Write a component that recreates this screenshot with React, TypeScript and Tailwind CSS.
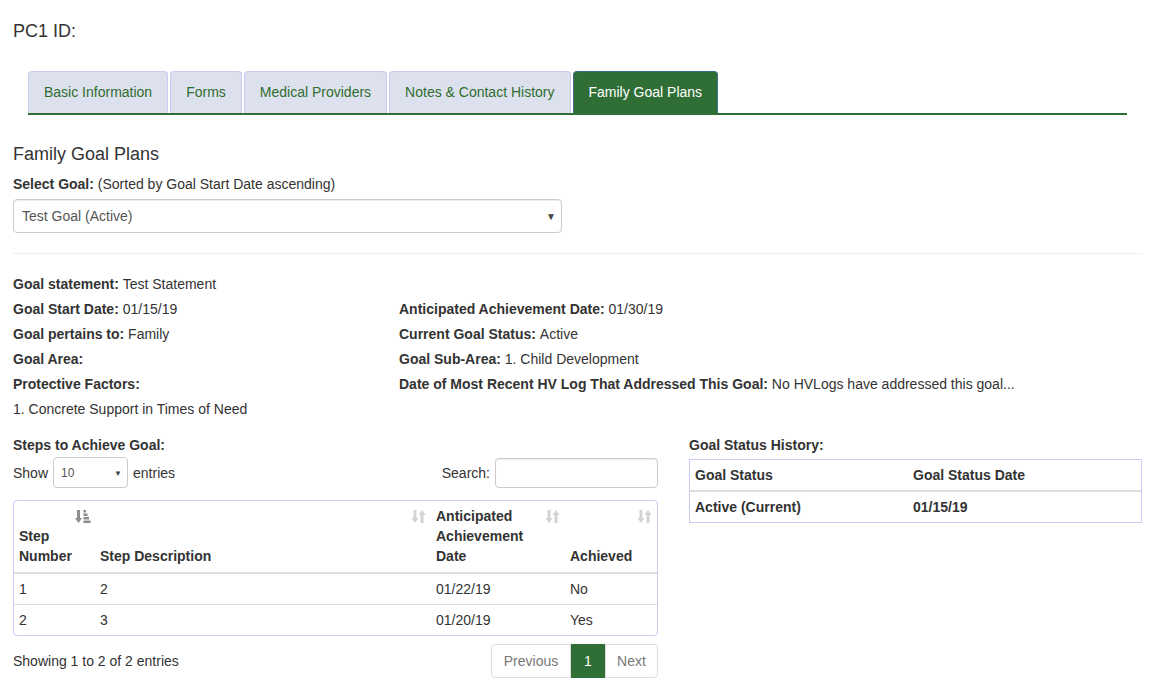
import React from "react";

function SortBoth() {
  return (
    <svg width="15" height="15" viewBox="0 0 15 15" className="block">
      <g fill="#d3d3d3">
        <rect x="2.5" y="1" width="3" height="9" />
        <polygon points="0.5,9 7.5,9 4,14" />
        <rect x="9.5" y="5" width="3" height="9" />
        <polygon points="7.5,6 14.5,6 11,1" />
      </g>
    </svg>
  );
}

function SortAsc() {
  return (
    <svg width="16" height="15" viewBox="0 0 16 15" className="block">
      <g fill="#8c8c8c">
        <rect x="2" y="1" width="3" height="9" />
        <polygon points="0,9 7,9 3.5,14" />
        <rect x="8.5" y="1" width="2.5" height="2.5" />
        <rect x="8.5" y="4.5" width="4" height="2.5" />
        <rect x="8.5" y="8" width="5.5" height="2.5" />
        <rect x="8.5" y="11.5" width="7" height="2.5" />
      </g>
    </svg>
  );
}

const tabs = [
  "Basic Information",
  "Forms",
  "Medical Providers",
  "Notes & Contact History",
];

function Tab({ label }: { label: string }) {
  return (
    <div className="h-[42px] px-[15px] pb-[2px] flex items-center border border-b-0 border-[#c9cbf3] rounded-t-[4px] bg-[#dde1ee] text-[#2f6d2f] text-[14px] mr-[2px]">
      {label}
    </div>
  );
}

function InfoRow({ children }: { children: React.ReactNode }) {
  return <div className="h-[25px] flex items-center">{children}</div>;
}

export default function App() {
  return (
    <div className="font-['Liberation_Sans',Arial,sans-serif] text-[#333] text-[14px] leading-[20px] bg-white min-h-[700px] px-[13px]">
      <div className="pt-[21px] text-[18px] leading-[20px]">PC1 ID:</div>

      <div className="mx-[15px] mt-[30px] border-b-2 border-[#2f6f36] flex items-end">
        {tabs.map((t) => (
          <Tab key={t} label={t} />
        ))}
        <div className="h-[42px] px-[15px] pb-[2px] flex items-center border border-b-0 border-[#3b6f8a] rounded-t-[4px] bg-[#2f6f36] text-white text-[14px]">
          Family Goal Plans
        </div>
      </div>

      <div className="mt-[29px] text-[18px] leading-[20px]">Family Goal Plans</div>
      <div className="mt-[10px]">
        <span className="font-bold">Select Goal:</span> (Sorted by Goal Start Date ascending)
      </div>
      <div className="mt-[5px] relative w-[549px] h-[34px] border border-[#ccc] rounded-[4px] flex items-center pl-[8px] text-[#555] shadow-[inset_0_1px_1px_rgba(0,0,0,0.075)]">
        Test Goal (Active)
        <span className="absolute right-[5px] top-[7px] text-[10px] text-[#444]">▼</span>
      </div>

      <div className="mt-[20px] border-t border-[#eee]" />

      <div className="mt-[17px]">
        <InfoRow>
          <span className="font-bold">Goal statement:</span>&nbsp;Test Statement
        </InfoRow>
        <div className="grid grid-cols-[386px_1fr]">
          <InfoRow>
            <span className="font-bold">Goal Start Date:</span>&nbsp;01/15/19
          </InfoRow>
          <InfoRow>
            <span className="font-bold">Anticipated Achievement Date:</span>&nbsp;01/30/19
          </InfoRow>
          <InfoRow>
            <span className="font-bold">Goal pertains to:</span>&nbsp;Family
          </InfoRow>
          <InfoRow>
            <span className="font-bold">Current Goal Status:</span>&nbsp;Active
          </InfoRow>
          <InfoRow>
            <span className="font-bold">Goal Area:</span>
          </InfoRow>
          <InfoRow>
            <span className="font-bold">Goal Sub-Area:</span>&nbsp;1. Child Development
          </InfoRow>
          <InfoRow>
            <span className="font-bold">Protective Factors:</span>
          </InfoRow>
          <InfoRow>
            <span className="font-bold">Date of Most Recent HV Log That Addressed This Goal:</span>
            &nbsp;No HVLogs have addressed this goal...
          </InfoRow>
        </div>
        <InfoRow>1. Concrete Support in Times of Need</InfoRow>
      </div>

      <div className="mt-[14px] flex gap-[31px]">
        <div className="w-[645px]">
          <div className="font-bold">Steps to Achieve Goal:</div>
          <div className="mt-[2px] flex items-center justify-between h-[31px]">
            <div className="flex items-center">
              <span>Show</span>
              <div className="relative ml-[5px] w-[75px] h-[31px] border border-[#ccc] rounded-[4px] flex items-center pl-[7px] text-[12px] text-[#555]">
                10
                <span className="absolute right-[5px] top-[6px] text-[8px] text-[#444]">▼</span>
              </div>
              <span className="ml-[5px]">entries</span>
            </div>
            <div className="flex items-center">
              <span>Search:</span>
              <div className="ml-[5px] w-[163px] h-[30px] border border-[#ccc] rounded-[4px] shadow-[inset_0_1px_1px_rgba(0,0,0,0.075)]" />
            </div>
          </div>

          <div className="mt-[12px] border border-[#cbcbf7] rounded-[4px] overflow-hidden">
            <table className="w-full table-fixed border-collapse">
              <colgroup>
                <col className="w-[81px]" />
                <col className="w-[336px]" />
                <col className="w-[134px]" />
                <col />
              </colgroup>
              <thead>
                <tr className="border-b-2 border-[#ddd]">
                  <th className="relative text-left align-bottom font-bold pb-[6px] pl-[5px] pr-[5px]">
                    <div className="w-[50px]">Step Number</div>
                    <span className="absolute right-[4px] top-[8px]"><SortAsc /></span>
                  </th>
                  <th className="relative text-left align-bottom font-bold pb-[6px] pl-[5px] pr-[30px]">
                    Step Description
                    <span className="absolute right-[5px] top-[8px]"><SortBoth /></span>
                  </th>
                  <th className="relative text-left align-bottom font-bold pt-[5px] pb-[6px] pl-[5px] pr-[30px]">
                    Anticipated Achievement Date
                    <span className="absolute right-[5px] top-[8px]"><SortBoth /></span>
                  </th>
                  <th className="relative text-left align-bottom font-bold pb-[6px] pl-[5px] pr-[20px]">
                    Achieved
                    <span className="absolute right-[5px] top-[8px]"><SortBoth /></span>
                  </th>
                </tr>
              </thead>
              <tbody>
                <tr className="border-b border-[#ddd]">
                  <td className="p-[5px]">1</td>
                  <td className="p-[5px]">2</td>
                  <td className="p-[5px]">01/22/19</td>
                  <td className="p-[5px]">No</td>
                </tr>
                <tr>
                  <td className="p-[5px]">2</td>
                  <td className="p-[5px]">3</td>
                  <td className="p-[5px]">01/20/19</td>
                  <td className="p-[5px]">Yes</td>
                </tr>
              </tbody>
            </table>
          </div>

          <div className="mt-[8px] flex items-center justify-between">
            <div>Showing 1 to 2 of 2 entries</div>
            <div className="flex h-[34px] text-[14px]">
              <div className="w-[80px] border border-[#ddd] rounded-l-[4px] flex items-center justify-center text-[#777]">
                Previous
              </div>
              <div className="w-[34px] bg-[#2f6f36] border border-[#2f6f36] flex items-center justify-center text-white">
                1
              </div>
              <div className="w-[53px] border border-[#ddd] rounded-r-[4px] flex items-center justify-center text-[#777]">
                Next
              </div>
            </div>
          </div>
        </div>

        <div className="flex-1">
          <div className="font-bold">Goal Status History:</div>
          <div className="mt-[4px] border border-[#cbcbf7]">
            <table className="w-full table-fixed border-collapse">
              <colgroup>
                <col className="w-[218px]" />
                <col />
              </colgroup>
              <thead>
                <tr className="border-b-2 border-[#ddd]">
                  <th className="text-left font-bold p-[5px]">Goal Status</th>
                  <th className="text-left font-bold p-[5px]">Goal Status Date</th>
                </tr>
              </thead>
              <tbody>
                <tr>
                  <td className="font-bold p-[5px]">Active (Current)</td>
                  <td className="font-bold p-[5px]">01/15/19</td>
                </tr>
              </tbody>
            </table>
          </div>
        </div>
      </div>
    </div>
  );
}
